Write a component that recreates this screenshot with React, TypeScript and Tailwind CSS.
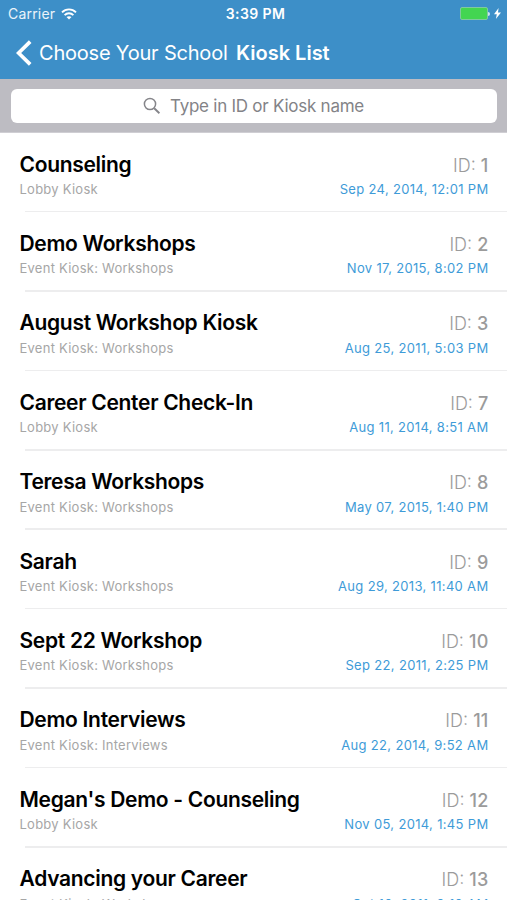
type Kiosk = {
  id: number;
  name: string;
  type: string;
  date: string;
};

const kiosks: Kiosk[] = [
  { id: 1, name: "Counseling", type: "Lobby Kiosk", date: "Sep 24, 2014, 12:01 PM" },
  { id: 2, name: "Demo Workshops", type: "Event Kiosk: Workshops", date: "Nov 17, 2015, 8:02 PM" },
  { id: 3, name: "August Workshop Kiosk", type: "Event Kiosk: Workshops", date: "Aug 25, 2011, 5:03 PM" },
  { id: 7, name: "Career Center Check-In", type: "Lobby Kiosk", date: "Aug 11, 2014, 8:51 AM" },
  { id: 8, name: "Teresa Workshops", type: "Event Kiosk: Workshops", date: "May 07, 2015, 1:40 PM" },
  { id: 9, name: "Sarah", type: "Event Kiosk: Workshops", date: "Aug 29, 2013, 11:40 AM" },
  { id: 10, name: "Sept 22 Workshop", type: "Event Kiosk: Workshops", date: "Sep 22, 2011, 2:25 PM" },
  { id: 11, name: "Demo Interviews", type: "Event Kiosk: Interviews", date: "Aug 22, 2014, 9:52 AM" },
  { id: 12, name: "Megan's Demo - Counseling", type: "Lobby Kiosk", date: "Nov 05, 2014, 1:45 PM" },
  { id: 13, name: "Advancing your Career", type: "Event Kiosk: Workshops", date: "Oct 10, 2011, 9:10 AM" },
];

const StatusBar = () => (
  <div className="grid h-[27px] grid-cols-3 items-center pl-2 pr-[6px]">
    <div className="flex items-center gap-[6px]">
      <span className="text-[14px] leading-5 tracking-[0.2px] text-white/90">Carrier</span>
      <svg className="h-3 w-4" viewBox="0 0 16 12" fill="none" stroke="white" strokeWidth="1.9">
        <path d="M1 4.4C5 .4 11 .4 15 4.4M3.6 7.1c2.5-2.4 6.3-2.4 8.8 0" />
        <path d="M8 11.6 5.5 9.1c1.4-1.3 3.6-1.3 5 0z" fill="white" stroke="none" />
      </svg>
    </div>
    <div className="pl-[2px] text-center text-[14px] leading-5 font-semibold tracking-[0.4px] text-white">
      3:39 PM
    </div>
    <div className="flex items-center justify-end">
      <div className="h-[13px] w-[28px] rounded-[2px] border border-[#7fc9a0] bg-[#43d551]" />
      <div className="h-1 w-[2px] rounded-r-full bg-white/75" />
      <svg className="ml-[4px] h-[11px] w-[7px]" viewBox="0 0 7 11" fill="white">
        <path d="M4.6 0 0 6.2h2.8L1.9 11 7 4.6H4z" />
      </svg>
    </div>
  </div>
);

const NavBar = () => (
  <div className="flex h-[52px] items-center pl-4 text-[20px] leading-6 text-white">
    <svg className="h-[26px] w-4" viewBox="0 0 16 26" fill="none" stroke="white" strokeWidth="3.7">
      <path d="M14.2 1.6 2.6 13l11.6 11.4" />
    </svg>
    <span className="ml-[7px] w-[197px] tracking-[-0.2px] whitespace-nowrap">
      Choose Your School
    </span>
    <h1 className="font-semibold whitespace-nowrap">Kiosk List</h1>
  </div>
);

const SearchBar = () => (
  <div className="h-[54px] border-b border-[#cfced3] bg-[#bdbcc2] pt-[10px] pr-[10px] pl-[11px]">
    <div className="flex h-[34px] items-center rounded-[6px] bg-white pl-[132px]">
      <svg
        className="h-[18px] w-[18px]"
        viewBox="0 0 18 18"
        fill="none"
        stroke="#85858a"
        strokeWidth="1.5"
      >
        <circle cx="7" cy="7" r="5.6" />
        <path d="m11.2 11.2 5.2 5" strokeWidth="1.9" />
      </svg>
      <span className="ml-[9px] text-[17px] leading-6 tracking-[-0.25px] whitespace-nowrap text-[#838387]">
        Type in ID or Kiosk name
      </span>
    </div>
  </div>
);

const KioskRow = ({ kiosk }: { kiosk: Kiosk }) => (
  <li className="flex h-[79.4px] shrink-0 flex-col">
    <div className="flex flex-1 justify-between pt-[18.6px] pr-[18.5px] pl-[19.5px]">
      <div>
        <div className="text-[21px] leading-[26px] font-semibold tracking-[-0.3px] whitespace-nowrap text-black">
          {kiosk.name}
        </div>
        <div className="mt-[3.4px] text-[13px] leading-4 tracking-[0.25px] text-[#a6a6a6]">
          {kiosk.type}
        </div>
      </div>
      <div className="text-right">
        <div className="pt-px text-[18px] leading-[26px] text-[#9b9b9b]">
          <span className="font-light">ID:</span>{" "}
          <span className="font-medium tracking-[0.2px]">{kiosk.id}</span>
        </div>
        <div className="mt-[2.4px] text-[13px] leading-4 tracking-[0.33px] text-[#3e9bd8]">
          {kiosk.date}
        </div>
      </div>
    </div>
    <div className="ml-[25px] h-[1.6px] bg-[#ededee]" />
  </li>
);

export default function App() {
  return (
    <div className="flex h-screen w-full flex-col overflow-hidden bg-white font-['Inter',sans-serif]">
      <header className="shrink-0 bg-[#3d8fc8]">
        <StatusBar />
        <NavBar />
      </header>
      <div className="shrink-0">
        <SearchBar />
      </div>
      <ul className="flex min-h-0 flex-1 flex-col overflow-hidden">
        {kiosks.map((kiosk) => (
          <KioskRow key={kiosk.id} kiosk={kiosk} />
        ))}
      </ul>
    </div>
  );
}
